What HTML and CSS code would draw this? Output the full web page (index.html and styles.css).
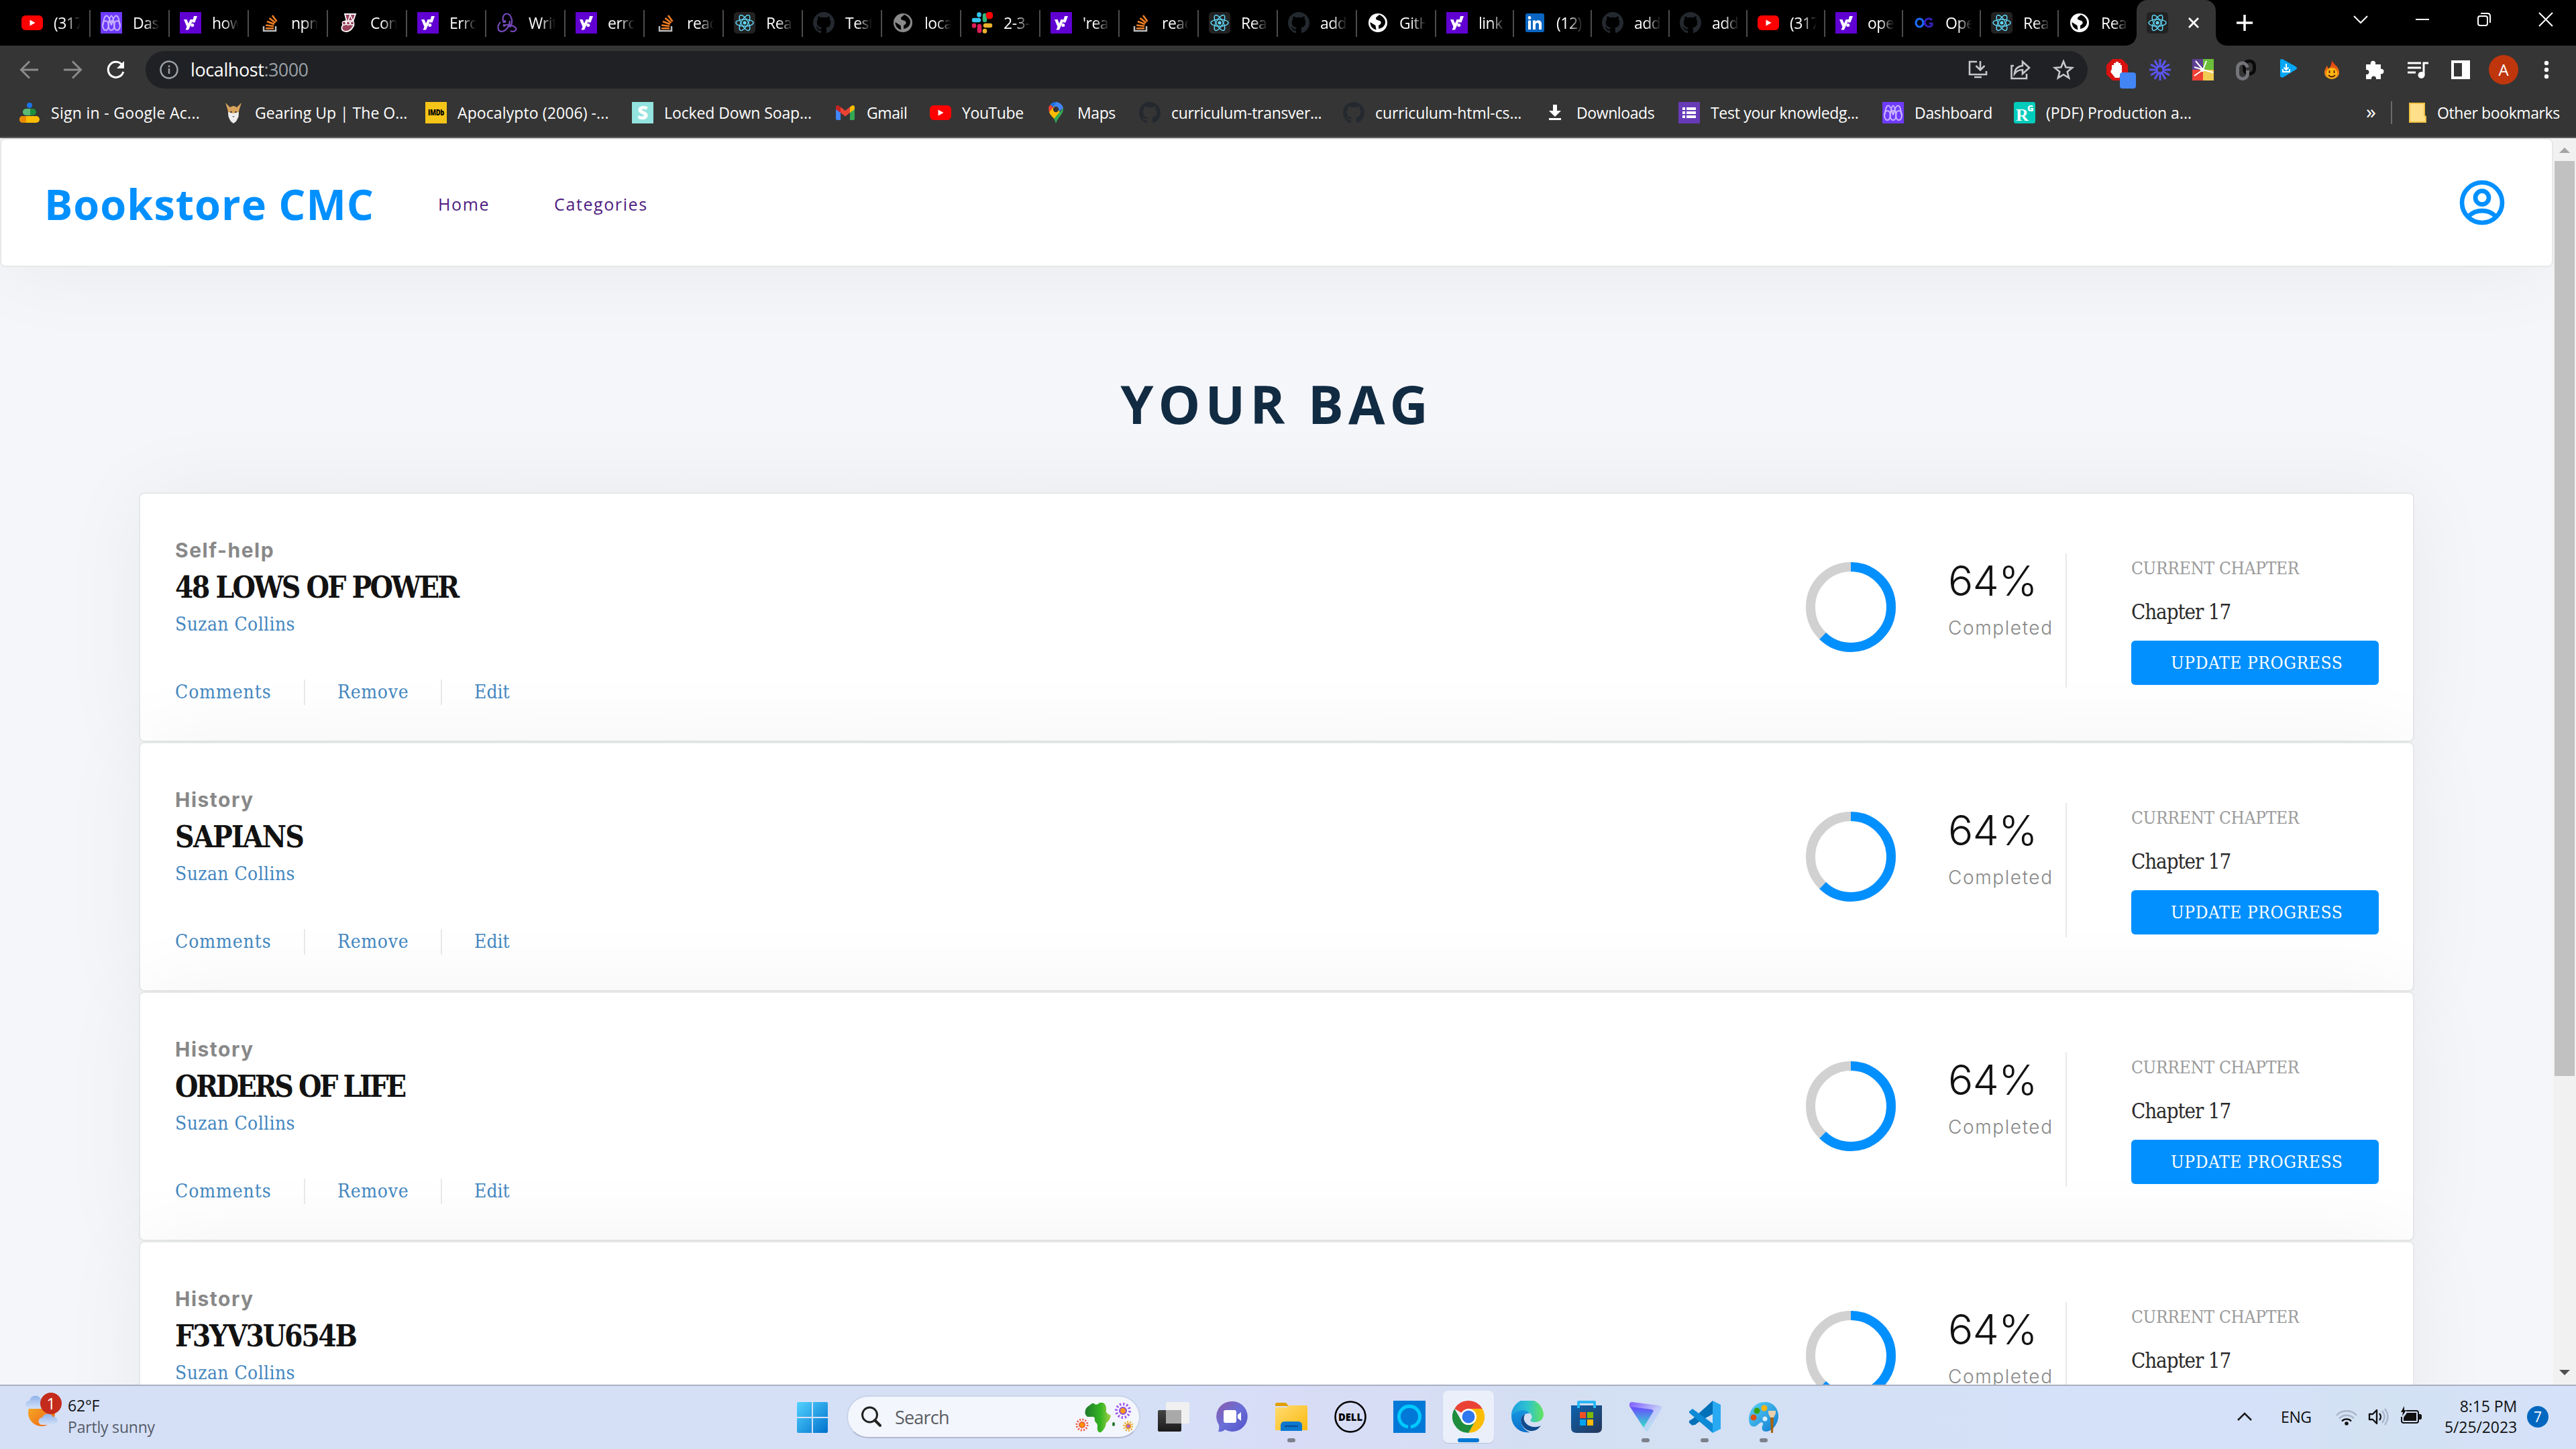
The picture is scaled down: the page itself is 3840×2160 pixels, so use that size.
FILE: index.html
```html
<!DOCTYPE html>
<html lang="en">
<head>
<meta charset="utf-8">
<title>Bookstore CMC</title>
<link rel="stylesheet" href="styles.css">
</head>
<body>
<svg class="sprite" aria-hidden="true">
  <defs>
    <linearGradient id="gWin" x1="0" y1="0" x2="1" y2="1"><stop offset="0" stop-color="#52d3ff"/><stop offset="1" stop-color="#0070cc"/></linearGradient>
    <linearGradient id="gSun" x1="0" y1="0" x2="1" y2="1"><stop offset="0" stop-color="#f5b52a"/><stop offset="1" stop-color="#ef5f12"/></linearGradient>
    <linearGradient id="gCloud" x1="0" y1="0" x2="0" y2="1"><stop offset="0" stop-color="#8fb2ea"/><stop offset="1" stop-color="#d3e1f7"/></linearGradient>
    <linearGradient id="gAfrica" x1="0" y1="0" x2="1" y2="0"><stop offset="0" stop-color="#1f7a2d"/><stop offset=".6" stop-color="#34b522"/><stop offset="1" stop-color="#a8d04a"/></linearGradient>
    <linearGradient id="gChat" x1="0" y1="0" x2="1" y2="1"><stop offset="0" stop-color="#8b5aa8"/><stop offset=".5" stop-color="#6a6fd8"/><stop offset="1" stop-color="#5350c8"/></linearGradient>
    <linearGradient id="gFolder" x1="0" y1="0" x2="1" y2="1"><stop offset="0" stop-color="#ffdc72"/><stop offset="1" stop-color="#fcb90f"/></linearGradient>
    <linearGradient id="gEdge" x1="0" y1="0" x2="1" y2="0"><stop offset="0" stop-color="#1b9de2"/><stop offset=".5" stop-color="#2fc3d0"/><stop offset="1" stop-color="#62e45c"/></linearGradient>
    <linearGradient id="gEdge2" x1="0" y1="0" x2="0" y2="1"><stop offset="0" stop-color="#1595e0"/><stop offset="1" stop-color="#0a6fc9"/></linearGradient>
    <linearGradient id="gStore" x1="0" y1="0" x2="1" y2="1"><stop offset="0" stop-color="#0c63b0"/><stop offset="1" stop-color="#263657"/></linearGradient>
    <linearGradient id="gVpn" x1="0" y1="0" x2="0" y2="1"><stop offset="0" stop-color="#6b48ff"/><stop offset="1" stop-color="#2fe3c8"/></linearGradient>
    <linearGradient id="gVpn2" x1="0" y1="0" x2="1" y2="1"><stop offset="0" stop-color="#7c5cff"/><stop offset=".55" stop-color="#c3c8fa"/><stop offset="1" stop-color="#a3f5e8"/></linearGradient>
    <linearGradient id="gPaint" x1="0" y1="0" x2="1" y2="1"><stop offset="0" stop-color="#5bd5f7"/><stop offset="1" stop-color="#0e78d0"/></linearGradient>
    <linearGradient id="gFire" x1="0" y1="0" x2="0" y2="1"><stop offset="0" stop-color="#e02a0c"/><stop offset="1" stop-color="#f7a81b"/></linearGradient>
    <linearGradient id="gTask" x1="0" y1="0" x2="0" y2="1"><stop offset="0" stop-color="#454545"/><stop offset="1" stop-color="#1b1b1b"/></linearGradient>
  </defs>
  <symbol id="youtube" viewBox="0 0 32 32"><rect y="5" width="32" height="22" rx="6" fill="#f00"/><path d="M12.500 11.500v9l8-4.500z" fill="#fff"/></symbol>
  <symbol id="mind" viewBox="0 0 32 32"><rect width="32" height="32" fill="#6f3bff"/><g fill="none" stroke="#c9b5ff" stroke-width="2"><ellipse cx="7.500" cy="20" rx="4.500" ry="7"/><ellipse cx="16" cy="20" rx="4.500" ry="7"/><ellipse cx="24.500" cy="20" rx="4.500" ry="7"/><path d="M3.500 19C5 9 6 5.500 9 5.500s5 6 7 14c2-8 4-14 7-14s4 3.500 5.500 13.500M11.500 19c1.500-9 3-13.500 4.500-13.500s3 4.500 4.500 13.500"/></g></symbol>
  <symbol id="yahoo" viewBox="0 0 32 32"><rect width="32" height="32" fill="#6001d2"/><path d="M6 11h4.500l2.500 6 2.500-6H20l-7 15.500H8.500l2-4.600zM21 6h5l-3.500 9.500h-4z" fill="#fff"/><circle cx="18.800" cy="19.500" r="2.500" fill="#fff"/></symbol>
  <symbol id="stack" viewBox="0 0 32 32"><path d="M7 21v7h18v-7" fill="none" stroke="#bcbbbb" stroke-width="2.500"/><g stroke="#f48024" stroke-width="2.600"><path d="M10 24.200h12M10.200 19.500l11.800 1.500M12 14l10.800 4M15.500 9l9 7M20 5l6.500 9"/></g></symbol>
  <symbol id="jest" viewBox="0 0 32 32"><path d="M10 3h16l-4.500 13a3.500 3.500 0 0 1 .5 6c-3 6-9 8.500-14 6-3.500-2-3.500-6.500 0-9.500a3.500 3.500 0 0 1 5-4.500z" fill="#99425b" stroke="#fff" stroke-width="1.800"/><path d="M18 4l-3 9h7z" fill="none" stroke="#fff" stroke-width="1.500"/><circle cx="21" cy="16.500" r="2.700" fill="#99425b" stroke="#fff" stroke-width="1.300"/><circle cx="15" cy="16.500" r="2.700" fill="#99425b" stroke="#fff" stroke-width="1.300"/><circle cx="9" cy="16.500" r="2.700" fill="#99425b" stroke="#fff" stroke-width="1.300"/></symbol>
  <symbol id="redux" viewBox="0 0 32 32"><g fill="none" stroke="#764abc" stroke-width="2.200"><path d="M21 21C26 13 21 2.500 15.500 2.500S8 10 11 16"/><path d="M11 20c6-2 14-1 18 4 2 4-4 6-8 4"/><path d="M20 13c0 7-5 15-12 16C1 29 1 20 6 15"/></g><g fill="#764abc"><circle cx="20.500" cy="21" r="2"/><circle cx="11.500" cy="20" r="2"/><circle cx="12.500" cy="14" r="2"/></g></symbol>
  <symbol id="react" viewBox="0 0 32 32"><rect width="32" height="32" rx="5" fill="#222"/><g fill="none" stroke="#61dafb" stroke-width="1.400"><ellipse cx="16" cy="16" rx="13" ry="5"/><ellipse cx="16" cy="16" rx="13" ry="5" transform="rotate(60 16 16)"/><ellipse cx="16" cy="16" rx="13" ry="5" transform="rotate(120 16 16)"/></g><circle cx="16" cy="16" r="2.500" fill="#61dafb"/></symbol>
  <symbol id="github" viewBox="0 0 16 16"><path fill="#24292f" d="M8 0C3.580 0 0 3.580 0 8c0 3.540 2.290 6.530 5.470 7.590.4.070.55-.17.55-.38 0-.19-.01-.82-.01-1.490-2.010.37-2.530-.49-2.690-.94-.09-.23-.48-.94-.82-1.130-.28-.15-.68-.52-.01-.53.63-.01 1.080.58 1.230.82.72 1.210 1.870.87 2.330.66.07-.52.28-.87.51-1.070-1.780-.2-3.640-.89-3.640-3.950 0-.87.31-1.590.82-2.150-.08-.2-.36-1.020.08-2.120 0 0 .67-.21 2.200.82a7.600 7.600 0 0 1 4 0c1.530-1.040 2.200-.82 2.200-.82.44 1.100.16 1.920.08 2.120.51.56.82 1.270.82 2.150 0 3.070-1.870 3.750-3.650 3.950.29.25.54.73.54 1.480 0 1.070-.01 1.930-.01 2.200 0 .21.15.46.55.38A8 8 0 0 0 16 8c0-4.420-3.580-8-8-8z"/></symbol>
  <symbol id="globe" viewBox="0 0 32 32"><circle cx="16" cy="16" r="14" fill="currentColor"/><path d="M18 4c-3 3-5 3-5 6 0 2 5 2 7 4 2 3-1 5-3 6v5c6-1 10-5 10-10S23 6 18 4zM4.500 15l8 5 1 6.500C8 25 4.500 21 4.500 15z" fill="#000"/></symbol>
  <symbol id="slack" viewBox="0 0 32 32"><g stroke-width="6.500" stroke-linecap="round"><path d="M4 12h7" stroke="#36c5f0"/><path d="M11.500 3.500v1" stroke="#36c5f0"/><path d="M20 5v7" stroke="#2eb67d"/><path d="M28 20h-7" stroke="#ecb22e"/><path d="M20 28v.5" stroke="#ecb22e"/><path d="M12 21v7M4 20v.5" stroke="#e01e5a"/></g><circle cx="27" cy="5" r="5.500" fill="#f00"/></symbol>
  <symbol id="linkedin" viewBox="0 0 32 32"><rect x="2" y="2" width="28" height="28" rx="3" fill="#0a66c2"/><path d="M6 12.500h4V26H6zM13 12.500h4v2c2-3.500 9-3 9 3V26h-4v-7c0-4-5-4-5 0v7h-4z" fill="#fff"/><circle cx="8" cy="8.500" r="2.400" fill="#fff"/></symbol>
  <symbol id="og" viewBox="0 0 32 32"><g fill="none" stroke-width="3.200"><ellipse cx="9.500" cy="16" rx="5.500" ry="6" stroke="#1a6dff"/><path d="M28 12a6 6 0 1 0 0 7.500V17h-4.500" stroke="#3420b8"/></g></symbol>
  <symbol id="googleads" viewBox="0 0 32 32"><circle cx="16" cy="5" r="4" fill="#1a73e8"/><rect x="6" y="10" width="20" height="10" rx="5" fill="#1e8e3e"/><path d="M11 10h6v10h-6a5 5 0 0 1 0-10z" fill="#5bb974"/><rect x="1" y="21" width="30" height="10" rx="5" fill="#fbbc04"/><path d="M6 21h5v10H6a5 5 0 0 1 0-10z" fill="#e98b00"/></symbol>
  <symbol id="goat" viewBox="0 0 32 32"><path d="M4 1l7 7q5-4 10 0l7-7-3.500 11-1 6-2 8-5.500 5-5.500-5-2-8-1-6z" fill="#d9a35c"/><path d="M8 15l8 2 8-2-.5 7-3.500 7-4 3-4-3-3.500-7z" fill="#eee"/><circle cx="12.500" cy="15" r="1.300" fill="#333"/><circle cx="19.500" cy="15" r="1.300" fill="#333"/><path d="M14.500 21h3L16 23z" fill="#555"/></symbol>
  <symbol id="imdb" viewBox="0 0 32 32"><rect width="32" height="32" fill="#f5c518"/><text x="16" y="20" text-anchor="middle" textLength="24" lengthAdjust="spacingAndGlyphs" class="glyph-black" font-size="12">IMDb</text></symbol>
  <symbol id="soap" viewBox="0 0 32 32"><rect width="32" height="32" fill="#93e3df"/><text x="16" y="26" text-anchor="middle" class="glyph-bold" font-size="28" fill="#fff">S</text></symbol>
  <symbol id="gmail" viewBox="0 0 32 32"><path d="M2 8v17a2 2 0 0 0 2 2h5V13z" fill="#4285f4"/><path d="M30 8v17a2 2 0 0 1-2 2h-5V13z" fill="#34a853"/><path d="M23 7.500l3-2c2-1 4 0 4 2.500v3l-7 5z" fill="#fbbc04"/><path d="M9 7.500l-3-2C4 4.500 2 5.500 2 8v3l7 5z" fill="#c5221f"/><path d="M9 7.500l7 5.500 7-5.500V16l-7 5.500L9 16z" fill="#ea4335"/></symbol>
  <symbol id="maps" viewBox="0 0 32 32"><path d="M16 0a11 11 0 0 0-8.500 4l6 5z" fill="#1a73e8"/><path d="M7.500 4A11 11 0 0 0 6 15l7.500-6z" fill="#ea4335"/><path d="M16 0c5 0 10 4 11 9l-11 9-4-7z" fill="#4285f4"/><path d="M6 15l8-9 8 9-8 11c-3-4-7-7-8-11z" fill="#fbbc04"/><path d="M27 9c1 9-8 13-11 23-1-2-1-4-3-7z" fill="#34a853"/><circle cx="16" cy="11" r="4.200" fill="#353535"/></symbol>
  <symbol id="download" viewBox="0 0 32 32"><path d="M13 4h6v9h6l-9 9-9-9h6zM7 24h18v3H7z" fill="#fff"/></symbol>
  <symbol id="forms" viewBox="0 0 32 32"><rect width="32" height="32" fill="#673ab7"/><path d="M6 8h4v4H6zM12 8h14v4H12zM6 14h4v4H6zM12 14h14v4H12zM6 20h4v4H6zM12 20h14v4H12z" fill="#fff"/></symbol>
  <symbol id="rg" viewBox="0 0 32 32"><rect width="32" height="32" rx="3" fill="#00ccbb"/><text x="3" y="28" font-size="26" class="glyph-serif" fill="#fff">R</text><text x="20" y="14" font-size="13" class="glyph-bold" fill="#fff">G</text></symbol>
  <symbol id="folder" viewBox="0 0 32 32"><path d="M4 2h22v18l2 2v8H4z" fill="#ffe08a" stroke="#f0c243" stroke-width="2"/></symbol>
</svg>

<div class="screen">
  <div class="tabstrip">
    <div class="tab"><svg><use href="#youtube"/></svg><span>(317)</span></div>
    <div class="tab"><svg><use href="#mind"/></svg><span>Dash</span></div>
    <div class="tab"><svg><use href="#yahoo"/></svg><span>how</span></div>
    <div class="tab"><svg><use href="#stack"/></svg><span>npm</span></div>
    <div class="tab"><svg><use href="#jest"/></svg><span>Con</span></div>
    <div class="tab"><svg><use href="#yahoo"/></svg><span>Error</span></div>
    <div class="tab"><svg><use href="#redux"/></svg><span>Writ</span></div>
    <div class="tab"><svg><use href="#yahoo"/></svg><span>erro</span></div>
    <div class="tab"><svg><use href="#stack"/></svg><span>reac</span></div>
    <div class="tab"><svg><use href="#react"/></svg><span>Rea</span></div>
    <div class="tab"><svg><use href="#github"/></svg><span>Test</span></div>
    <div class="tab gray"><svg><use href="#globe"/></svg><span>loca</span></div>
    <div class="tab"><svg><use href="#slack"/></svg><span>2-3-</span></div>
    <div class="tab"><svg><use href="#yahoo"/></svg><span>'rea</span></div>
    <div class="tab"><svg><use href="#stack"/></svg><span>reac</span></div>
    <div class="tab"><svg><use href="#react"/></svg><span>Rea</span></div>
    <div class="tab"><svg><use href="#github"/></svg><span>add</span></div>
    <div class="tab"><svg><use href="#globe"/></svg><span>GitH</span></div>
    <div class="tab slim"><svg><use href="#yahoo"/></svg><span>link</span></div>
    <div class="tab slim"><svg><use href="#linkedin"/></svg><span>(12)</span></div>
    <div class="tab slim"><svg><use href="#github"/></svg><span>add</span></div>
    <div class="tab slim"><svg><use href="#github"/></svg><span>add</span></div>
    <div class="tab slim"><svg><use href="#youtube"/></svg><span>(317)</span></div>
    <div class="tab slim"><svg><use href="#yahoo"/></svg><span>ope</span></div>
    <div class="tab slim"><svg><use href="#og"/></svg><span>Ope</span></div>
    <div class="tab slim"><svg><use href="#react"/></svg><span>Rea</span></div>
    <div class="tab slim last"><svg><use href="#globe"/></svg><span>Rea</span></div>
    <div class="tab-active"><svg class="fav"><use href="#react"/></svg><svg class="x" viewBox="0 0 16 16"><path d="M1 1l14 14M15 1L1 15" stroke="#fff" stroke-width="2.800"/></svg></div>
    <svg class="plus" viewBox="0 0 24 24"><path d="M12 0v24M0 12h24" stroke="#fff" stroke-width="3.500"/></svg>
    <div class="window-controls">
      <svg viewBox="0 0 24 24"><path d="M2 7l10 10L22 7" fill="none" stroke="#fff" stroke-width="2"/></svg>
      <svg viewBox="0 0 24 24"><path d="M2 12h20" stroke="#fff" stroke-width="2"/></svg>
      <svg viewBox="0 0 24 24"><rect x="3" y="7" width="14" height="14" rx="3" fill="none" stroke="#fff" stroke-width="2"/><path d="M7 3h10q4 0 4 4v10" fill="none" stroke="#fff" stroke-width="2"/></svg>
      <svg viewBox="0 0 24 24"><path d="M2 2l20 20M22 2L2 22" stroke="#fff" stroke-width="2"/></svg>
    </div>
  </div>

  <div class="toolbar">
    <svg class="nav-icon dim" viewBox="0 0 32 32"><path d="M29 16H4M16 3.500L3.500 16 16 28.500" /></svg>
    <svg class="nav-icon dim" viewBox="0 0 32 32"><path d="M3 16h25M16 3.500L28.500 16 16 28.500" /></svg>
    <svg class="nav-icon" viewBox="0 0 32 32"><path d="M26 9a11.500 11.500 0 1 0 1.800 10" /><path d="M29 3v11H18z" class="solid"/></svg>
    <div class="omnibox">
      <svg class="info" viewBox="0 0 28 28"><circle cx="14" cy="14" r="12.500" fill="none" stroke="#9aa0a6" stroke-width="2.500"/><path d="M14 12v8M14 7.500v2.800" stroke="#9aa0a6" stroke-width="2.500"/></svg>
      <span class="url">localhost<i>:3000</i></span>
      <svg viewBox="0 0 32 32"><path d="M15 4H4v19h25v-5M11 27h11M20 3v13M13.500 10l6.500 6.500 6.500-6.500" class="line"/></svg>
      <svg viewBox="0 0 32 32"><path d="M6 10H2.500v19H25v-7M19 4v6C11 11 7.500 16 7 22c3-4 6-6 12-6v6l10-9z" class="line"/></svg>
      <svg viewBox="0 0 32 32"><path d="M16 3.500l3.500 8.800 9.500.7-7.300 6 2.400 9.200L16 23.200l-8.100 5 2.400-9.200L3 13l9.500-.7z" class="line"/></svg>
    </div>
    <div class="extensions">
      <svg viewBox="0 0 44 44"><path d="M9 0h14l9 9v14l-9 9H9l-9-9V9z" fill="#d9120f"/><path d="M8 15V9h3V6h3V4h4v2h3v3h2v14l-4 5h-6l-7-9z" fill="#fff"/><rect x="20" y="20" width="24" height="24" rx="4" fill="#4285f4"/></svg>
      <svg viewBox="0 0 32 32"><g stroke="#5b55f0" stroke-width="3"><path d="M16 0v32M0 16h32M8 2.100l16 27.800M24 2.100L8 29.900M2.100 8l27.800 16M29.900 8L2.100 24"/></g><circle cx="16" cy="16" r="3.500" fill="#353535"/></svg>
      <svg viewBox="0 0 32 32"><path d="M0 0h16v16H0z" fill="#5e3f94"/><path d="M16 0h16v16H16z" fill="#6cbf3a"/><path d="M0 16h16v16H0z" fill="#ef4036"/><path d="M16 16h16v16H16z" fill="#f0ca52"/><path d="M16 16L5 3M16 16L21 3M16 16l15 4M16 16L3 25M16 16L3 12" stroke="#fff" stroke-width="2"/><circle cx="15" cy="16" r="3" fill="#fff"/></svg>
      <svg viewBox="0 0 32 32"><g fill="none" stroke-width="5"><rect x="13.500" y="3" width="15" height="19" rx="7" stroke="#0a0a0a"/><path d="M18 12.500a7 7 0 0 0-14.500 1.500v8a7.500 7.500 0 0 0 15 0v-5" stroke="#74757a"/></g></svg>
      <svg viewBox="0 0 32 32"><path d="M3 1q2-2 5 0l18 10q4 3 0 5L8 27q-5 2-5-3z" fill="#05a7f7"/><path d="M12 7v9M8.500 12.500L12 16l3.500-3.500M7 15v4h10v-4" stroke="#fff" stroke-width="2" fill="none"/></svg>
      <svg viewBox="0 0 32 32"><path d="M16 1c1 6 11 10 11 19a11 10 0 0 1-22 0c0-5 3-6 3-10 2 1 3 3 3 5 3-3 5-8 5-14z" fill="url(#gFire)"/><circle cx="16" cy="21" r="8" fill="#fdb813"/><path d="M12.500 17v4M19.500 17v4M11 24q5 5 10 0" stroke="#5a1a05" stroke-width="1.800" fill="none"/></svg>
      <svg viewBox="0 0 32 32"><path d="M3 8h7c-2-7 9-7 7 0h8v7c6-2 6 9 0 7v8h-7c1-6-8-6-7 0H3v-7c6 1 6-8 0-7z" fill="#fff"/></svg>
      <svg viewBox="0 0 32 32"><path d="M1 6h20M1 13h20M1 20h12" stroke="#fff" stroke-width="3"/><path d="M25 24V6h7" stroke="#fff" stroke-width="3" fill="none"/><circle cx="21.500" cy="24" r="5" fill="#fff"/></svg>
      <svg viewBox="0 0 32 32"><path d="M2 2h28v28H2zM6 6v20h12V6z" fill="#fff" fill-rule="evenodd"/></svg>
    </div>
    <span class="profile">A</span>
    <svg class="dots" viewBox="0 0 8 28"><circle cx="4" cy="4" r="3.200"/><circle cx="4" cy="14" r="3.200"/><circle cx="4" cy="24" r="3.200"/></svg>
  </div>

  <div class="bookmarks">
    <div class="bm w304"><svg><use href="#googleads"/></svg><span class="t0">Sign in - Google Ac...</span></div>
    <div class="bm w302"><svg><use href="#goat"/></svg><span class="t4">Gearing Up | The O...</span></div>
    <div class="bm w308"><svg><use href="#imdb"/></svg><span class="t1">Apocalypto (2006) -...</span></div>
    <div class="bm w302"><svg><use href="#soap"/></svg><span class="t3">Locked Down Soap...</span></div>
    <div class="bm w142"><svg><use href="#gmail"/></svg><span>Gmail</span></div>
    <div class="bm w172"><svg><use href="#youtube"/></svg><span>YouTube</span></div>
    <div class="bm w140"><svg><use href="#maps"/></svg><span>Maps</span></div>
    <div class="bm w304"><svg><use href="#github"/></svg><span class="t2">curriculum-transver...</span></div>
    <div class="bm w300"><svg><use href="#github"/></svg><span class="t3">curriculum-html-cs...</span></div>
    <div class="bm w200"><svg><use href="#download"/></svg><span>Downloads</span></div>
    <div class="bm w304"><svg><use href="#forms"/></svg><span class="t2">Test your knowledg...</span></div>
    <div class="bm w196"><svg><use href="#mind"/></svg><span class="t2">Dashboard</span></div>
    <div class="bm grow"><svg><use href="#rg"/></svg><span class="t4">(PDF) Production a...</span></div>
    <span class="more">»</span>
    <div class="bm other"><svg><use href="#folder"/></svg><span>Other bookmarks</span></div>
  </div>

  <div class="viewport">
    <div class="page">
      <header class="site-header">
        <h1>Bookstore CMC</h1>
        <nav><a>Home</a><a>Categories</a></nav>
        <svg class="user" viewBox="0 0 24 24"><g fill="none" stroke="#0290ff" stroke-width="2"><circle cx="12" cy="12" r="9"/><circle cx="12" cy="9.800" r="3"/><path d="M5.900 18.200a8.600 8.600 0 0 1 12.200 0"/></g></svg>
      </header>
      <h2 class="title">YOUR BAG</h2>
      <main class="books">
        <article class="book">
          <div class="info-col"><p class="category">Self-help</p><h3>48 LOWS OF POWER</h3><p class="author">Suzan Collins</p><div class="actions"><a class="a1">Comments</a><a class="a2">Remove</a><a class="a3">Edit</a></div></div>
          <svg class="ring" viewBox="0 0 134 134"><circle cx="67" cy="67" r="60"/><circle class="arc" cx="67" cy="67" r="60" pathLength="100"/></svg>
          <div class="stats"><p class="percent">64%</p><p class="completed">Completed</p></div>
          <div class="chapter"><p class="label">CURRENT CHAPTER</p><p class="current">Chapter 17</p><div class="button">UPDATE PROGRESS</div></div>
        </article>
        <article class="book">
          <div class="info-col"><p class="category">History</p><h3>SAPIANS</h3><p class="author">Suzan Collins</p><div class="actions"><a class="a1">Comments</a><a class="a2">Remove</a><a class="a3">Edit</a></div></div>
          <svg class="ring" viewBox="0 0 134 134"><circle cx="67" cy="67" r="60"/><circle class="arc" cx="67" cy="67" r="60" pathLength="100"/></svg>
          <div class="stats"><p class="percent">64%</p><p class="completed">Completed</p></div>
          <div class="chapter"><p class="label">CURRENT CHAPTER</p><p class="current">Chapter 17</p><div class="button">UPDATE PROGRESS</div></div>
        </article>
        <article class="book">
          <div class="info-col"><p class="category">History</p><h3>ORDERS OF LIFE</h3><p class="author">Suzan Collins</p><div class="actions"><a class="a1">Comments</a><a class="a2">Remove</a><a class="a3">Edit</a></div></div>
          <svg class="ring" viewBox="0 0 134 134"><circle cx="67" cy="67" r="60"/><circle class="arc" cx="67" cy="67" r="60" pathLength="100"/></svg>
          <div class="stats"><p class="percent">64%</p><p class="completed">Completed</p></div>
          <div class="chapter"><p class="label">CURRENT CHAPTER</p><p class="current">Chapter 17</p><div class="button">UPDATE PROGRESS</div></div>
        </article>
        <article class="book">
          <div class="info-col"><p class="category">History</p><h3>F3YV3U654B</h3><p class="author">Suzan Collins</p><div class="actions"><a class="a1">Comments</a><a class="a2">Remove</a><a class="a3">Edit</a></div></div>
          <svg class="ring" viewBox="0 0 134 134"><circle cx="67" cy="67" r="60"/><circle class="arc" cx="67" cy="67" r="60" pathLength="100"/></svg>
          <div class="stats"><p class="percent">64%</p><p class="completed">Completed</p></div>
          <div class="chapter"><p class="label">CURRENT CHAPTER</p><p class="current">Chapter 17</p><div class="button">UPDATE PROGRESS</div></div>
        </article>
      </main>
    </div>
    <div class="scrollbar">
      <svg viewBox="0 0 34 34"><path d="M9 22h16l-8-8z" fill="#a3a3a3"/></svg>
      <div class="thumb"></div>
      <svg viewBox="0 0 34 34"><path d="M9 12h16l-8 8z" fill="#505050"/></svg>
    </div>
  </div>

  <div class="taskbar">
    <div class="weather">
      <svg viewBox="0 0 56 56"><circle cx="24" cy="30" r="20" fill="url(#gSun)"/><path d="M6 24a6 6 0 0 1 0-12 9 9 0 0 1 17-2 7 7 0 0 1 3 14z" fill="url(#gCloud)"/><path d="M25 48a5.500 5.500 0 0 1 0-11 9 9 0 0 1 16-1 6 6 0 0 1 1 12z" fill="url(#gCloud)"/><circle cx="38" cy="16" r="16" fill="#c42b1c"/></svg>
      <span class="count">1</span>
      <div class="weather-text"><span>62°F</span><span class="soft">Partly sunny</span></div>
    </div>
    <svg class="start" viewBox="0 0 46 46"><path d="M0 2q0-2 2-2h20v22H0zM24 0h20q2 0 2 2v20H24zM0 24h22v22H2q-2 0-2-2zM24 24h22v20q0 2-2 2H24z" fill="url(#gWin)"/></svg>
    <div class="search">
      <svg class="mag" viewBox="0 0 32 32"><circle cx="13.500" cy="13" r="11" fill="none" stroke="#222" stroke-width="3"/><path d="M21 21l8 8" stroke="#222" stroke-width="4" stroke-linecap="round"/></svg>
      <span>Search</span>
      <svg class="art" viewBox="0 0 88 48"><path d="M17 14q1-4 6-7l4-3h3l2 2 4-1 2-2h5q5 2 5 9v5q3 4 7 5-1 7-7 11-1 7-4 10-3 5-7 4-3-3-2-9 0-4-3-6-2-3-1-6l-2-2H20q-5-4-3-10z" fill="url(#gAfrica)"/><ellipse cx="59" cy="35" rx="2" ry="3" fill="#237a2a"/><g fill="none"><circle cx="73" cy="15" r="10" stroke="#a45cf0" stroke-width="4" stroke-dasharray="2.500 2.700"/><circle cx="12" cy="36" r="8" stroke="#f0503a" stroke-width="3" stroke-dasharray="2 2.200"/><circle cx="81" cy="38" r="6.500" stroke="#e9b53a" stroke-width="3" stroke-dasharray="2 2"/></g><circle cx="73" cy="15" r="5" fill="#f59a17" stroke="#9347e0" stroke-width="2"/><circle cx="12" cy="36" r="4" fill="#ff9800" stroke="#f0603a" stroke-width="2"/><circle cx="81" cy="38" r="3.500" fill="#a366c9" stroke="#f09a22" stroke-width="2"/></svg>
    </div>
    <div class="apps">
      <div class="app"><svg viewBox="0 0 48 48"><rect x="1" y="14" width="35" height="32" rx="2" fill="url(#gTask)"/><rect x="13" y="2" width="35" height="32" rx="2" fill="#f0f0f0"/><path d="M13 14h23v20H13z" fill="#a9a9a9"/></svg></div>
      <div class="app"><svg viewBox="0 0 48 48"><path d="M24 1a22.500 22.500 0 1 1-11 42q-4 4-10 3 2-5 1-10A22.500 22.500 0 0 1 24 1z" fill="url(#gChat)"/><rect x="11" y="14" width="19" height="19" rx="3" fill="#fff"/><path d="M32 21l5-4v13l-5-4z" fill="#fff"/></svg></div>
      <div class="app run"><svg viewBox="0 0 48 48"><path d="M0 6q0-3 3-3h13l4 5H0z" fill="#e0a000"/><path d="M0 10h17l3-3h26q2 0 2 2v35H0z" fill="url(#gFolder)"/><path d="M8 45V37q0-6 6-6h20q6 0 6 6v8z" fill="#0b79d0"/><path d="M14 38h20" stroke="#0a4f96" stroke-width="2.500"/></svg></div>
      <div class="app"><svg viewBox="0 0 48 48"><circle cx="24" cy="24" r="22.500" fill="none" stroke="#000" stroke-width="2.600"/><text x="24" y="29.500" text-anchor="middle" textLength="36" lengthAdjust="spacingAndGlyphs" font-size="15" class="glyph-bold">DELL</text></svg></div>
      <div class="app"><svg viewBox="0 0 48 48"><path d="M0 0h48v48H0z" fill="#0078d7"/><path d="M22 39a15.500 15.500 0 1 1 4 0" fill="none" stroke="#00caff" stroke-width="5"/></svg></div>
      <div class="app current-app"><svg viewBox="0 0 48 48"><path d="M24 24L3.200 12A24 24 0 0 1 44.800 12z" fill="#ea4335"/><path d="M24 12h20.800A24 24 0 0 1 24 48l10.400-18z" fill="#fbbc04"/><path d="M3.200 12l10.400 18A12 12 0 0 0 34.400 30L24 48A24 24 0 0 1 3.200 12z" fill="#1e8e3e"/><circle cx="24" cy="24" r="12" fill="#fff"/><circle cx="24" cy="24" r="9.500" fill="#2f78ee"/></svg></div>
      <div class="app"><svg viewBox="0 0 48 48"><path d="M0 24A24 24 0 0 1 48 20c0 8-6 12-13 12-5 0-8-2-6-4 4-4 0-11-7-11-8 0-16 3-22 7z" fill="url(#gEdge)"/><path d="M0 24c4-9 20-14 27-5-9-1-15 6-12 15 2 7 8 12 13 13A24 24 0 0 1 0 24z" fill="url(#gEdge2)"/><path d="M21 20c-9 3-8 13-3 19 6 8 19 9 26-2-9 5-22 1-25-8-1-4 0-7 2-9z" fill="#114a8b"/></svg></div>
      <div class="app"><svg viewBox="0 0 48 48"><path d="M1 7h46v33q0 8-8 8H9q-8 0-8-8z" fill="url(#gStore)"/><path d="M12 11V2h24v9" fill="none" stroke="#28b8f5" stroke-width="4" stroke-linejoin="round"/><path d="M14 17h9v9h-9z" fill="#f25022"/><path d="M25 17h9v9h-9z" fill="#7fba00"/><path d="M14 28h9v9h-9z" fill="#00a4ef"/><path d="M25 28h9v9h-9z" fill="#ffb900"/></svg></div>
      <div class="app run"><svg viewBox="0 0 48 48"><path d="M4 2l40 5q5 1 4 5L28 44q-3 4-5 0L0 8Q-1 2 4 2z" fill="url(#gVpn2)"/><path d="M1 9l32 4q4 1 2 4L21 40z" fill="url(#gVpn)"/></svg></div>
      <div class="app run"><svg viewBox="0 0 48 48"><path d="M36 10v10L6 37l-5-4v-3z" fill="#0070b8"/><path d="M36 0v14L10 36l-5 0-4-4z" fill="#0070b8"/><path d="M1 16l5-4 30 22v14L1 18z" fill="#0d8ad6"/><path d="M36 0l12 6v36l-12 6z" fill="#29a9f2"/></svg></div>
      <div class="app run"><svg viewBox="0 0 48 48"><path d="M25 2c13-1 21 10 21 20 0 12-8 23-18 24-8 0-7-6-5-11 0-5-5-2-8 1-5 5-13 3-13-8C2 14 12 2 25 2z" fill="url(#gPaint)"/><circle cx="25" cy="11" r="4.500" fill="#f9b40d"/><circle cx="14" cy="15" r="4.500" fill="#3aa010"/><circle cx="9" cy="25" r="4.500" fill="#dd4f16"/><circle cx="26" cy="27" r="3.500" fill="#d9ecfb"/><path d="M34 24h5l-1 24h-3z" fill="#a8630f"/><path d="M31 15h11v4l-3 6h-5l-3-6z" fill="#e8cfae"/></svg></div>
    </div>
    <div class="tray">
      <svg class="chev" viewBox="0 0 24 24"><path d="M2 17L12 7l10 10" fill="none" stroke="#1a1a1a" stroke-width="2.500"/></svg>
      <span class="lang">ENG</span>
      <svg class="wifi" viewBox="0 0 32 26"><g fill="none" stroke-width="2.400"><path d="M1 11a20 20 0 0 1 30 0M5 15.500a15 15 0 0 1 22 0" stroke="#a9b4cb"/><path d="M9 19.500a9.500 9.500 0 0 1 14 0" stroke="#111"/></g><circle cx="16" cy="23" r="2.800" fill="#111"/></svg>
      <svg class="sound" viewBox="0 0 32 28"><path d="M2 10h5l6-6v20l-6-6H2z" fill="none" stroke="#111" stroke-width="2.400" stroke-linejoin="round"/><path d="M17 9q4 5 0 10" fill="none" stroke="#111" stroke-width="2.200"/><path d="M21 5q7 9 0 18M25 2q9 12 0 24" fill="none" stroke="#a9b4cb" stroke-width="2.200"/></svg>
      <svg class="battery" viewBox="0 0 32 28"><path d="M9 7h15q3 0 3 3v12q0 3-3 3H5q-3 0-3-3v-6" fill="none" stroke="#111" stroke-width="2"/><path d="M10 10h14v12H5v-5z" fill="#111"/><path d="M28 12h2q2 0 2 2v4q0 2-2 2h-2zM6 0L1 9h3l-1 6 6-9H6z" fill="#111"/></svg>
      <div class="clock"><span>8:15 PM</span><span>5/25/2023</span></div>
      <span class="notify">7</span>
    </div>
  </div>
</div>
</body>
</html>
```
FILE: styles.css
```css
* { box-sizing: border-box; }
body, h1, h2, h3, p { margin: 0; }
body { width: 3840px; height: 2160px; overflow: hidden; font-family: "Open Sans", sans-serif; color: #111; }
svg { display: block; flex: none; }
.sprite { position: absolute; width: 0; height: 0; }
.screen { display: flex; flex-direction: column; width: 3840px; height: 2160px; }
.glyph-black, .glyph-bold { font-family: "Open Sans", sans-serif; font-weight: 800; }
.glyph-serif { font-family: "Liberation Serif", serif; font-weight: 700; }

/* Tab strip */
.tabstrip { display: flex; height: 68px; padding-left: 17px; background: #000; color: #fff; }
.tab { position: relative; display: flex; align-items: center; width: 118px; height: 68px; padding-left: 15px; font-size: 23px; }
.tab.slim { width: 116px; }
.tab::after { content: ""; width: 2px; height: 40px; background: #4c4c4c; margin-left: auto; margin-top: 2px; }
.tab.last::after { display: none; }
.tab svg { width: 32px; height: 32px; }
.tab span { width: 40px; margin-left: 16px; overflow: hidden; white-space: nowrap; letter-spacing: -.5px; -webkit-mask-image: linear-gradient(90deg, #000 45%, transparent); mask-image: linear-gradient(90deg, #000 45%, transparent); }
.tab.gray svg { color: #8a8a8a; }
.tab-active { position: relative; display: flex; align-items: center; gap: 30px; width: 118px; height: 68px; padding-left: 15px; background: #353535; border-radius: 16px 16px 0 0; }
.tab-active::before, .tab-active::after { content: ""; position: absolute; bottom: 0; width: 16px; height: 16px; }
.tab-active::before { left: -16px; background: radial-gradient(circle at 0 0, transparent 15.500px, #353535 16px); }
.tab-active::after { right: -16px; background: radial-gradient(circle at 100% 0, transparent 15.500px, #353535 16px); }
.fav { width: 32px; height: 32px; }
.x { width: 16px; height: 16px; }
.plus { width: 24px; height: 24px; margin: 22px 0 0 31px; }
.window-controls { display: flex; gap: 68px; margin: 17px 0 0 149px; }
.window-controls svg { width: 24px; height: 24px; }

/* Address bar */
.toolbar { display: flex; align-items: center; height: 72px; padding: 0 0 0 28px; background: #353535; }
.nav-icon { width: 32px; height: 32px; margin-right: 32px; fill: none; stroke: #fff; stroke-width: 3; }
.nav-icon.dim { stroke: #8b8b8b; }
.nav-icon .solid { fill: #fff; stroke: none; }
.omnibox { display: flex; align-items: center; width: 2895px; height: 56px; margin-left: -3px; padding: 0 20px 0 21px; border-radius: 28px; background: #202124; }
.omnibox svg { width: 32px; height: 32px; margin-left: 32px; }
.omnibox svg.info { width: 28px; height: 28px; margin: 0 18px 0 0; }
.line { fill: none; stroke: #c6c7c9; stroke-width: 2.600; }
.url { flex: 1; color: #fff; font-size: 27px; letter-spacing: -.4px; line-height: 56px; }
.url i { font-style: normal; color: #9aa0a6; letter-spacing: -.6px; }
.extensions { display: flex; align-items: flex-start; gap: 32px; margin: 12px 0 0 28px; }
.extensions svg { width: 32px; height: 32px; }
.extensions svg:first-child { width: 44px; height: 44px; margin-right: -12px; }
.profile { width: 44px; height: 44px; margin-left: 26px; border-radius: 50%; background: #bf360c; color: #fff; font-size: 24px; line-height: 43px; text-align: center; }
.dots { width: 8px; height: 28px; margin-left: 38px; fill: #fff; }

/* Bookmarks bar */
.bookmarks { display: flex; align-items: center; height: 66px; padding: 0 0 8px 28px; border-bottom: 2px solid #5e5e5e; background: #353535; color: #fff; }
.bm { display: flex; align-items: center; gap: 16px; font-size: 23px; line-height: 32px; letter-spacing: -.4px; white-space: nowrap; }
.bm svg { width: 32px; height: 32px; }
.bm .t0 { letter-spacing: .3px; }
.bm .t1 { letter-spacing: .1px; }
.bm .t2 { letter-spacing: -.3px; }
.bm .t3 { letter-spacing: -.1px; }
.bm .t4 { letter-spacing: 0; }
.w304 { width: 304px; } .w302 { width: 302px; } .w308 { width: 308px; } .w142 { width: 142px; } .w172 { width: 172px; }
.w140 { width: 140px; } .w300 { width: 300px; } .w200 { width: 200px; } .w196 { width: 196px; }
.grow { flex: 1; }
.more { width: 37px; font-size: 30px; line-height: 30px; padding-bottom: 4px; }
.other { width: 276px; height: 34px; padding-left: 22px; border-left: 2px solid #6a6a6a; }
.other.bm { gap: 13px; }

/* Page */
.viewport { display: flex; height: 1858px; overflow: hidden; background: #f5f6fa; }
.page { width: 3806px; height: 1858px; overflow: hidden; }
.site-header { display: flex; align-items: center; height: 192px; padding: 0 64px; border: 2px solid #e8e8e8; border-radius: 8px; background: #fff; box-shadow: 0 4px 130px rgba(0, 0, 0, .055); }
.site-header h1 { width: 587px; color: #0290ff; font-size: 63px; line-height: 80px; letter-spacing: 1px; padding-top: 4px; white-space: nowrap; }
.site-header nav { display: flex; flex: 1; gap: 96px; padding-top: 3px; color: #4e1c80; font-size: 25px; line-height: 34px; letter-spacing: 1.600px; }
.user { width: 80px; height: 80px; }
.title { height: 118px; margin-top: 145px; color: #112b42; font-size: 79px; line-height: 118px; letter-spacing: 7px; text-align: center; }
.books { margin: 73px 207px 0 207px; }
.book { display: flex; height: 372px; padding: 0 51px 0 52px; border: 2px solid #e6e8e8; border-radius: 8px; background: #fff; box-shadow: 0 2px 130px rgba(0, 0, 0, .055); }
.info-col { flex: 1; padding-top: 64px; }
.category { color: #888; font: 700 30px/40px Inter, sans-serif; letter-spacing: 1.500px; }
.book h3 { margin-top: 8px; color: #121212; font: 700 44px/56px "DejaVu Serif Condensed", "DejaVu Serif", serif; letter-spacing: -2.800px; }
.book:nth-child(2) h3 { letter-spacing: -1.700px; }
.book:nth-child(3) h3 { letter-spacing: -3.300px; }
.book:nth-child(4) h3 { letter-spacing: -2.300px; }
.author, .actions { color: #4386bf; font: 28px/36px "DejaVu Serif Condensed", "DejaVu Serif", serif; letter-spacing: .4px; }
.author { margin-top: 9px; }
.actions { display: flex; margin-top: 64px; line-height: 38px; }
.actions a + a { padding-left: 48px; border-left: 2px solid #e8e8e8; }
.a1 { width: 192px; letter-spacing: .9px; } .a2 { width: 204px; letter-spacing: .7px; } .a3 { width: 100px; }
.actions .a3 { letter-spacing: 0; }
.ring { width: 134px; height: 134px; margin: 102px 78px 0 0; fill: none; stroke: #d1d1d1; stroke-width: 14; }
.arc { stroke: #0290ff; stroke-dasharray: 62.300 100; transform: rotate(-90deg); transform-origin: 67px 67px; }
.stats { width: 177px; height: 200px; margin-top: 89px; padding-top: 5px; border-right: 2px solid #e8e8e8; font-family: Inter, sans-serif; font-weight: 300; }
.percent { color: #121212; font-size: 62px; line-height: 72px; letter-spacing: -.5px; }
.completed { margin-top: 17px; color: #888; font-size: 28px; line-height: 34px; letter-spacing: 1.600px; }
.chapter { width: 369px; margin-left: 96px; padding-top: 95px; font-family: "DejaVu Serif Condensed", "DejaVu Serif", serif; }
.label { color: #9a9a9a; font-size: 26px; line-height: 32px; letter-spacing: -.3px; }
.current { margin-top: 29px; color: #2a2a2a; font-size: 31px; line-height: 40px; letter-spacing: -1.100px; white-space: nowrap; }
.button { height: 66px; margin-top: 23px; padding-left: 59px; border-radius: 6px; background: #0290ff; color: #fff; font-size: 26px; line-height: 66px; letter-spacing: .6px; }
.scrollbar { width: 34px; height: 1858px; padding-left: 2px; background: #f1f1f1; }
.scrollbar svg { width: 34px; height: 34px; margin-left: -2px; }
.thumb { width: 30px; height: 1364px; margin-bottom: 426px; background: #c1c1c1; }

/* Taskbar */
.taskbar { display: flex; align-items: flex-start; height: 96px; border-top: 2px solid #a9b0c0; background: linear-gradient(90deg, #d5e0f7 0, #d5e0f7 45%, #d8dcf6 50%, #d3dff2 62%, #d5e1f8 80%, #d5e1f8 88%, #d3e1f3 92%, #d5e1f9 100%); }
.weather { position: relative; display: flex; width: 1188px; padding: 20px 0 0 38px; }
.weather svg { width: 56px; height: 56px; margin-top: -10px; }
.count { position: absolute; left: 60px; top: 10px; width: 32px; color: #fff; font-size: 24px; line-height: 32px; text-align: center; }
.weather-text { display: flex; flex-direction: column; margin: -7px 0 0 7px; font-size: 23px; line-height: 32px; letter-spacing: -.2px; }
.soft { color: #555b66; }
.start { width: 46px; height: 46px; margin-top: 24px; }
.search { display: flex; align-items: center; width: 438px; height: 64px; margin: 14px 0 0 28px; padding: 0 9px 0 19px; border: 2px solid #c9d3e8; border-bottom-color: #b0b9cf; border-radius: 32px; background: #f3f6fd; }
.mag { width: 32px; height: 32px; margin-right: 19px; }
.search span { flex: 1; color: #5a5d63; font-size: 27px; letter-spacing: -.8px; }
.art { width: 88px; height: 48px; }
.apps { display: flex; gap: 12px; margin: 7px 0 0 11px; }
.app { position: relative; display: flex; justify-content: center; width: 76px; height: 78px; padding-top: 15px; }
.app svg { width: 48px; height: 48px; }
.current-app { border-radius: 8px; background: #eaeffa; box-shadow: 0 1px 1px #b9c3d8; }
.app.run::after, .current-app::after { content: ""; position: absolute; bottom: 1px; left: 32px; width: 12px; height: 6px; border-radius: 3px; background: #7c818c; }
.current-app::after { left: 22px; width: 32px; background: #0078d4; }
.tray { display: flex; align-items: center; height: 92px; margin-left: 667px; font-size: 23px; }
.chev { width: 24px; height: 24px; margin: 0 42px 0 0; }
.lang { width: 82px; letter-spacing: -.4px; }
.wifi { width: 32px; height: 26px; }
.sound { width: 32px; height: 28px; margin-left: 16px; }
.battery { width: 32px; height: 28px; margin-left: 16px; margin-top: -4px; }
.clock { display: flex; flex-direction: column; width: 142px; line-height: 31px; text-align: right; letter-spacing: -.1px; margin-top: -1px; }
.notify { width: 32px; height: 32px; margin-left: 15px; border-radius: 50%; background: #0067c0; color: #fff; font-size: 21px; line-height: 32px; text-align: center; }
```
